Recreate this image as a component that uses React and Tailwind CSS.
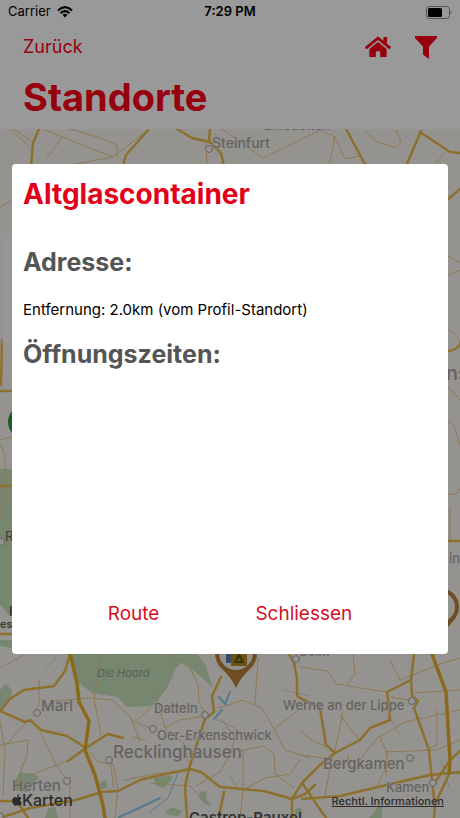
import React from 'react';
import { FaApple, FaHome } from 'react-icons/fa';

const forests = [
  'M0 469 H14 V610 L8 614 L0 604 Z',
  'M68 650 L78 682 L92 693 L118 697 L126 707 L152 706 L166 690 L176 668 L182 662 L200 676 L213 688 L205 664 L194 650 Z',
  'M0 690 L6 683 L12 691 L10 701 L0 708 Z',
  'M0 640 H12 V648 L0 646 Z',
  'M15 781 L20 772 L34 774 L39 777 L33 785 L26 792 L14 790 Z',
  'M45 818 L48 808 L55 807 L58 818 Z',
  'M100 782 L107 780 L107 788 L101 789 Z',
  'M154 778 L170 775 L173 779 L163 788 L155 785 Z',
  'M165 812 L172 807 L182 811 L179 816 L168 815 Z',
  'M200 792 L207 791 L206 799 L212 805 L205 804 L199 798 Z',
  'M369 818 L378 807 L382 805 L382 818 Z',
  'M294 810 L300 807 L303 812 L296 815 Z',
];

const mainRoads = [
  'M39 129 L33 143 L31 166',
  'M148 130 L126 155 L123 166',
  'M177 129 L192 138 L210 142 L221 153 L224 166',
  'M210 129 L209 142',
  'M346 129 L366 166',
  'M421 131 L406 166',
  'M420 132 L450 152 L460 153',
  'M447 200 L460 189',
  'M447 351 Q455 351 460 345',
  'M0 391 H13',
  'M0 486 H13',
  'M0 634 H13',
  'M447 541 H460',
  'M2 340 L1 385',
  'M70 654 L65 671 L54 686 L24 690 L10 699 L0 711',
  'M0 711 L25 722 L30 720 L41 730 L67 736 L86 748',
  'M68 761 L86 748 L108 734 L123 738',
  'M0 818 L30 808 L76 800 L102 792 L118 791 L140 780 L165 774 L190 769 L201 772 L220 787 L264 791 L292 799 L305 794 L315 785',
  'M0 801 L17 801 L28 818',
  'M221 677 L212 696 L214 712 L205 719 L190 765 L185 786 L187 818',
  'M224 792 L219 816',
  'M289 654 L294 663 L297 678 L297 696 L307 702',
  'M300 698 L320 708 L326 745 L335 753 L360 740 L370 728 L390 720 L387 692 L411 680 L414 654',
  'M411 680 L412 696 L418 701 L414 708 L429 750 L432 780 L435 806 L434 818',
  'M335 753 L320 765 L302 783 L292 799',
  'M302 783 L326 818',
  'M302 799 L340 796 L378 787 L430 775 L460 772',
  'M460 751 L450 760 L434 784',
  'M292 799 V818',
  'M450 772 L437 800',
];

const motorways = [
  'M70 653 L77 683 L79 702 L89 721 L85 750 L95 775 L103 805 L105 818',
  'M432 654 L446 692 L450 760 L449 773',
];

const minorRoads = [
  'M10 129 L30 147',
  'M45 130 L62 137 L113 157 L148 130',
  'M70 129 L97 137 L117 145 L117 157',
  'M62 137 L47 158 M14 129 L31 141',
  'M113 157 L70 165 M206 143 L207 165',
  'M222 129 L263 158 L320 130 L335 137 L330 162',
  'M335 137 L345 159 L360 156',
  'M365 131 L375 141 L395 148 L401 142 L396 130',
  'M445 152 L435 165',
  'M0 207 L12 200',
  'M447 255 L460 263 M447 276 L460 270',
  'M447 330 Q459 332 460 345',
  'M447 385 L460 400 M447 420 L454 426 L460 445',
  'M447 494 Q458 496 460 489',
  'M0 440 L12 437',
  'M0 445 Q6 450 5 470 V500 L0 515',
  'M450 508 V541',
  'M0 668 L24 655',
  'M0 722 L5 750 L3 795',
  'M39 680 V705 L33 716 M25 724 L5 746 M0 745 L28 740 L27 755 L13 790',
  'M40 732 L56 765 L67 780',
  'M67 761 L33 774',
  'M55 701 L90 698 L112 700 L130 716 L140 741',
  'M101 654 L94 698 L101 736',
  'M135 722 L151 707',
  'M135 722 L153 729 M133 737 L145 740',
  'M90 752 L98 762 L113 764 L118 789 L115 818',
  'M110 760 L114 790 M70 775 V818',
  'M125 780 L160 773',
  'M170 654 L190 668 L198 684 L199 702 L205 714',
  'M156 694 L165 728 L180 720 L205 716',
  'M165 728 L184 744 L188 762',
  'M258 658 L255 704',
  'M219 708 L243 700 L262 708 L274 729 L285 750 L310 758',
  'M274 729 L290 717 L300 708',
  'M240 751 L263 746 L274 754 L275 774 L294 788',
  'M243 750 V790 L240 818 M243 790 L265 778 L290 774 L300 760',
  'M223 721 L235 738 L230 755 L220 772 L196 786',
  'M151 783 L190 786 L202 798',
  'M300 667 L328 671 L336 684 L386 692',
  'M353 654 L355 674 L348 684',
  'M390 660 L400 680 L440 664 L460 658',
  'M415 693 L460 690',
  'M413 701 L391 697',
  'M380 737 L405 722 L460 710',
  'M340 715 L360 741 M343 712 L335 750',
  'M300 731 L315 742 L330 748',
  'M360 760 L379 736 L387 752 L386 775',
  'M386 752 L437 750 L460 740',
  'M437 710 L437 745 L425 750',
  'M348 755 V762 L330 769 L325 795',
  'M386 768 L378 785 M300 755 L333 759',
  'M437 773 L460 774',
];

const towns = [
  [209, 149], [37, 713], [67, 781], [109, 760], [153, 729], [205, 715],
  [412, 701], [410, 758], [433, 783], [296, 659], [1, 542], [0, 816],
];

const labels = [
  { name: 'Emsdetten', x: 264, y: 130, size: 13 },
  { name: 'Steinfurt', x: 212, y: 148, size: 14 },
  { name: 'Marl', x: 41, y: 711, size: 15 },
  { name: 'Datteln', x: 154, y: 713, size: 13 },
  { name: 'Oer-Erkenschwick', x: 157, y: 740, size: 13 },
  { name: 'Recklinghausen', x: 113, y: 758, size: 17 },
  { name: 'Werne an der Lippe', x: 283, y: 710, size: 13 },
  { name: 'Bergkamen', x: 323, y: 769, size: 15 },
  { name: 'Kamen', x: 386, y: 792, size: 13 },
  { name: 'Herten', x: 12, y: 791, size: 15 },
  { name: 'Selm', x: 299, y: 656, size: 13 },
  { name: 'ns', x: 446, y: 380, size: 20 },
  { name: 'in', x: 449, y: 563, size: 13 },
];

const StatusBar = () => (
  <div className="grid h-6 grid-cols-3 items-center px-2 text-[13px] text-black">
    <div className="flex items-center gap-1.5">
      <span>Carrier</span>
      <svg viewBox="0 0 17 12" className="h-3 w-4" aria-hidden="true">
        <path d="M1 4.4 Q8.5 -2.6 16 4.4" fill="none" stroke="#000" strokeWidth="2.3" />
        <path d="M3.7 7.2 Q8.5 2.8 13.3 7.2" fill="none" stroke="#000" strokeWidth="2.2" />
        <path d="M5.9 9 Q8.5 6.9 11.1 9 L8.5 11.8 Z" fill="#000" />
      </svg>
    </div>
    <span className="text-center font-semibold">7:29 PM</span>
    <svg viewBox="0 0 26 13" className="h-[13px] w-[26px] justify-self-end" aria-label="Battery">
      <rect x="0.5" y="0.5" width="23" height="12" rx="3" fill="none" stroke="#888" />
      <rect x="2" y="2" width="14" height="9" rx="1.5" fill="#000" />
      <path d="M24.5 4.5 Q26.5 6.5 24.5 8.5 Z" fill="#888" />
    </svg>
  </div>
);

const Header = () => (
  <header className="bg-white text-[#fa0019]">
    <StatusBar />
    <div className="flex h-[46px] items-center justify-between px-[23px]">
      <a href="#" className="text-lg">Zurück</a>
      <div className="flex items-center gap-6">
        <button type="button" aria-label="Startseite">
          <FaHome className="h-[26px] w-[26px]" />
        </button>
        <button type="button" aria-label="Filter">
          <svg viewBox="0 0 22 23" className="h-[23px] w-[22px]" fill="currentColor">
            <path d="M0 0 H22 V2 L14 10.5 V23 L8 18.5 V10.5 L0 2 Z" />
          </svg>
        </button>
      </div>
    </div>
    <h1 className="h-[59px] px-[23px] text-[38px] leading-[54px] font-bold">Standorte</h1>
  </header>
);

const Pin = ({ x, y }) => (
  <g transform={`translate(${x} ${y})`}>
    <path d="M0 35 Q-5 24 -15 15 A21 21 0 1 1 15 15 Q5 24 0 35 Z" fill="#b9803a" />
    <circle r="17" fill="#f4f1ea" />
    <rect x="-10" y="-10" width="5" height="20" fill="#577eae" />
    <rect x="-5" y="-12" width="16" height="25" rx="1" fill="#b88a1c" />
    <path d="M3 2 L7 9 H-1 Z" fill="none" stroke="#5d5310" strokeWidth="2" />
  </g>
);

const MapView = () => (
  <main className="relative flex-1 overflow-hidden bg-[#f9f5ef]">
    <svg
      viewBox="0 129 460 689"
      preserveAspectRatio="xMidYMid slice"
      className="absolute inset-0 h-full w-full"
      fill="none"
      strokeLinejoin="round"
      strokeLinecap="round"
    >
      {forests.map((d) => <path key={d} d={d} fill="#c6dfb8" />)}
      <g stroke="#8ccbe8">
        <path d="M119 817 L135 810 L160 798" strokeWidth="2" />
        <path d="M150 812 L168 798 L178 773" />
        <path d="M219 697 L225 704 L230 692 M214 719 L222 710" strokeWidth="2" />
      </g>
      <path d="M214 718 L235 728 M45 668 L55 660 L57 648 M390 718 L400 735 M283 690 L310 696 M230 775 L238 790 M441 760 L450 790" stroke="#d9d6d2" />
      <g stroke="#ecc987">
        {minorRoads.map((d) => <path key={d} d={d} />)}
      </g>
      <g stroke="#eabb4b" strokeWidth="2.5">
        {mainRoads.map((d) => <path key={d} d={d} />)}
      </g>
      <g stroke="#e8b02f" strokeWidth="3.5">
        {motorways.map((d) => <path key={d} d={d} />)}
      </g>
      <g stroke="#a9a4a2" fill="#f9f5ef">
        {towns.map(([x, y]) => <circle key={`${x}-${y}`} cx={x} cy={y} r="3.5" />)}
      </g>

      <g fill="#a8a5a3" stroke="#f9f5ef" strokeWidth="1" paintOrder="stroke" className="font-medium">
        {labels.map(({ name, x, y, size }) => (
          <text key={name} x={x} y={y} fontSize={size}>{name}</text>
        ))}
      </g>
      <text x="97" y="677" fontSize="11" fill="#8da389" className="italic">Die Haard</text>
      <text x="189" y="823" fontSize="15" fill="#555" className="font-semibold">Castrop-Rauxel</text>
      <text x="5" y="541" fontSize="13" fill="#666">R</text>
      <text x="9" y="616" fontSize="13" fill="#4d664d" className="font-semibold">H</text>
      <text x="0" y="628" fontSize="11" fill="#4d664d" className="font-semibold">es</text>

      <rect x="2" y="234" width="60" height="112" rx="4" fill="#fff" fillOpacity="0.6" />
      <circle cx="25" cy="422" r="17" fill="#2f9e3f" />
      <circle cx="440" cy="607" r="17" stroke="#b9803a" strokeWidth="4" />
      <path d="M457 610 Q454 622 447 628 V621 Q453 616 457 610 Z" fill="#b9803a" />
      <Pin x={236} y={653} />
    </svg>
    <div className="absolute inset-x-3 bottom-2 flex items-end justify-between text-[#4a4a4a]">
      <div className="flex items-center text-base leading-5 font-medium">
        <FaApple className="h-3.5 w-2.5" />
        Karten
      </div>
      <a href="#" className="mr-1 text-[11px] leading-[18px] font-medium underline">Rechtl. Informationen</a>
    </div>
  </main>
);

const LocationDialog = () => (
  <div className="fixed inset-0 flex items-center bg-black/40 px-3">
    <section
      role="dialog"
      aria-labelledby="location-title"
      className="flex min-h-[60vh] w-full flex-col rounded bg-white px-[11px] pt-3"
    >
      <h2 id="location-title" className="text-[28px] leading-9 font-bold text-[#e2001a]">Altglascontainer</h2>
      <h3 className="mt-8 text-[25px] leading-9 font-bold text-[#555]">Adresse:</h3>
      <p className="mt-5 text-[15px] leading-5 text-black">Entfernung: 2.0km (vom Profil-Standort)</p>
      <h3 className="mt-4 text-[25px] leading-9 font-bold text-[#555]">Öffnungszeiten:</h3>
      <div className="mt-auto flex justify-center gap-24 pb-[26px] text-[19px] leading-7 text-[#d4101f]">
        <button type="button">Route</button>
        <button type="button">Schliessen</button>
      </div>
    </section>
  </div>
);

const App = () => {
  return (
    <div className="flex min-h-screen flex-col font-['Inter',sans-serif]">
      <Header />
      <MapView />
      <LocationDialog />
    </div>
  );
};

export default App;
